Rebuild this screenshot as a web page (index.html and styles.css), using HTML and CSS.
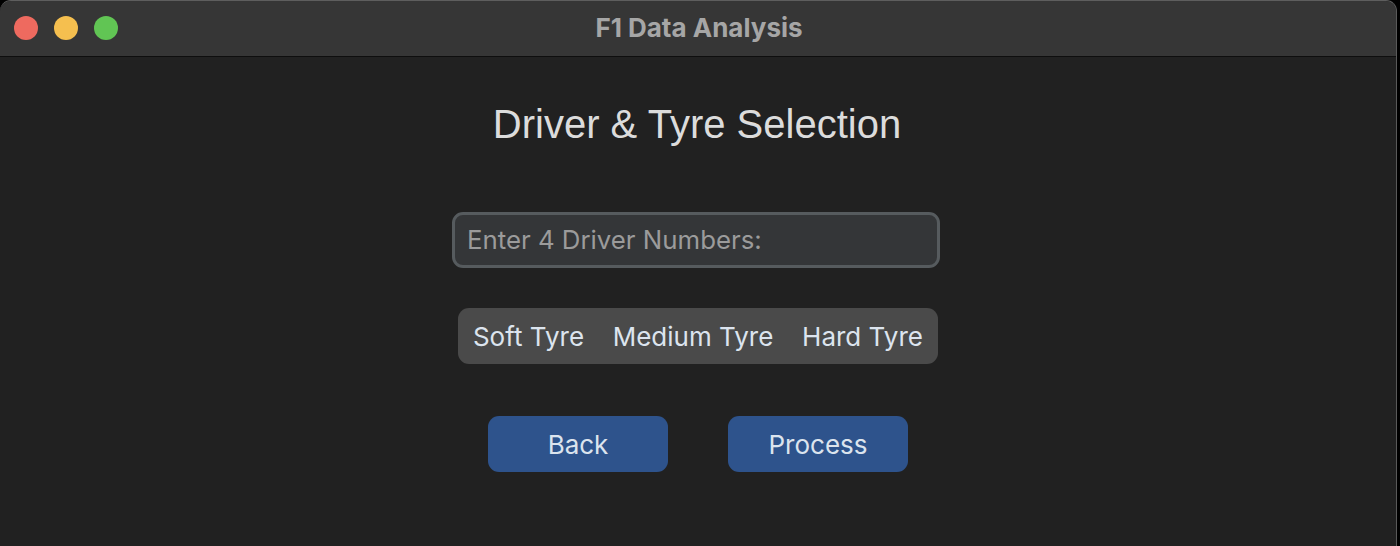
FILE: index.html
```html
<!DOCTYPE html>
<html lang="en">
<head>
<meta charset="utf-8">
<title>F1 Data Analysis</title>
<link rel="stylesheet" href="styles.css">
</head>
<body>
<div class="window">
  <header class="titlebar">
    <div class="lights">
      <span class="light red"></span>
      <span class="light yellow"></span>
      <span class="light green"></span>
    </div>
    <div class="title">F1 Data Analysis</div>
  </header>
  <main class="content">
    <h1 class="heading">Driver &amp; Tyre Selection</h1>
    <div class="entry">
      <input class="entry-input" type="text" placeholder="Enter 4 Driver Numbers:">
    </div>
    <div class="segmented">
      <span class="seg seg-soft">Soft Tyre</span>
      <span class="seg seg-medium">Medium Tyre</span>
      <span class="seg seg-hard">Hard Tyre</span>
    </div>
    <div class="actions">
      <button class="btn">Back</button>
      <button class="btn">Process</button>
    </div>
  </main>
</div>
</body>
</html>
```

FILE: styles.css
```css
html, body {
  margin: 0;
  padding: 0;
  background: #000;
  height: 100%;
  overflow: hidden;
}

.window {
  box-sizing: border-box;
  width: 1397px;
  height: 546px;
  background: #212121;
  border-top: 1px solid #5e5e5e;
  border-right: 1px solid #5a5a5a;
  border-top-left-radius: 11px;
  border-top-right-radius: 11px;
  overflow: hidden;
  display: flex;
  flex-direction: column;
}

.titlebar {
  box-sizing: border-box;
  height: 56px;
  flex: none;
  background: #363636;
  border-bottom: 1px solid #0e0e0e;
  position: relative;
  display: flex;
  align-items: center;
  justify-content: center;
}

.lights {
  position: absolute;
  left: 14px;
  top: 15px;
  display: flex;
  gap: 16px;
}

.light {
  width: 24px;
  height: 24px;
  border-radius: 50%;
}
.red { background: #ee6a5f; }
.yellow { background: #f5bf4f; }
.green { background: #61c554; }

.title {
  font-family: Inter, "Noto Sans", sans-serif;
  font-weight: 700;
  font-size: 26px;
  color: #a6a6a6;
  margin-top: -2px;
  margin-left: 2px;
}

.content {
  flex: 1;
  display: flex;
  flex-direction: column;
  align-items: center;
  padding-top: 44px;
}

.heading {
  margin: 0 0 65px -2px;
  font-family: "Liberation Sans", Arial, sans-serif;
  font-weight: 400;
  font-size: 40px;
  line-height: 46px;
  color: #dcdcdc;
}

.entry {
  box-sizing: border-box;
  width: 488px;
  height: 56px;
  margin-left: -4px;
  margin-bottom: 40px;
  background: #343638;
  border: 3px solid #565b5e;
  border-radius: 11px;
  display: flex;
  align-items: center;
  padding: 0 12px;
}

.entry-input {
  width: 100%;
  border: 0;
  outline: 0;
  background: transparent;
  font-family: Inter, "Noto Sans", sans-serif;
  font-size: 25.8px;
  color: #dce4ee;
  padding: 0;
  margin-top: -2px;
}
.entry-input::placeholder {
  color: #9b9b9b;
}

.segmented {
  box-sizing: border-box;
  width: 480px;
  height: 56px;
  margin-bottom: 52px;
  background: #4a4a4a;
  border-radius: 11px;
  display: flex;
}

.seg {
  display: flex;
  align-items: center;
  justify-content: center;
  font-family: Inter, "Noto Sans", sans-serif;
  font-size: 26px;
  color: #dce4ee;
}
.seg-soft { width: 141px; }
.seg-medium { width: 188px; }
.seg-hard { width: 151px; }

.actions {
  display: flex;
  gap: 60px;
}

.btn {
  width: 180px;
  height: 56px;
  border: 0;
  border-radius: 11px;
  background: #2e538c;
  color: #dce4ee;
  font-family: Inter, "Noto Sans", sans-serif;
  font-size: 26px;
  padding: 0;
}
```
